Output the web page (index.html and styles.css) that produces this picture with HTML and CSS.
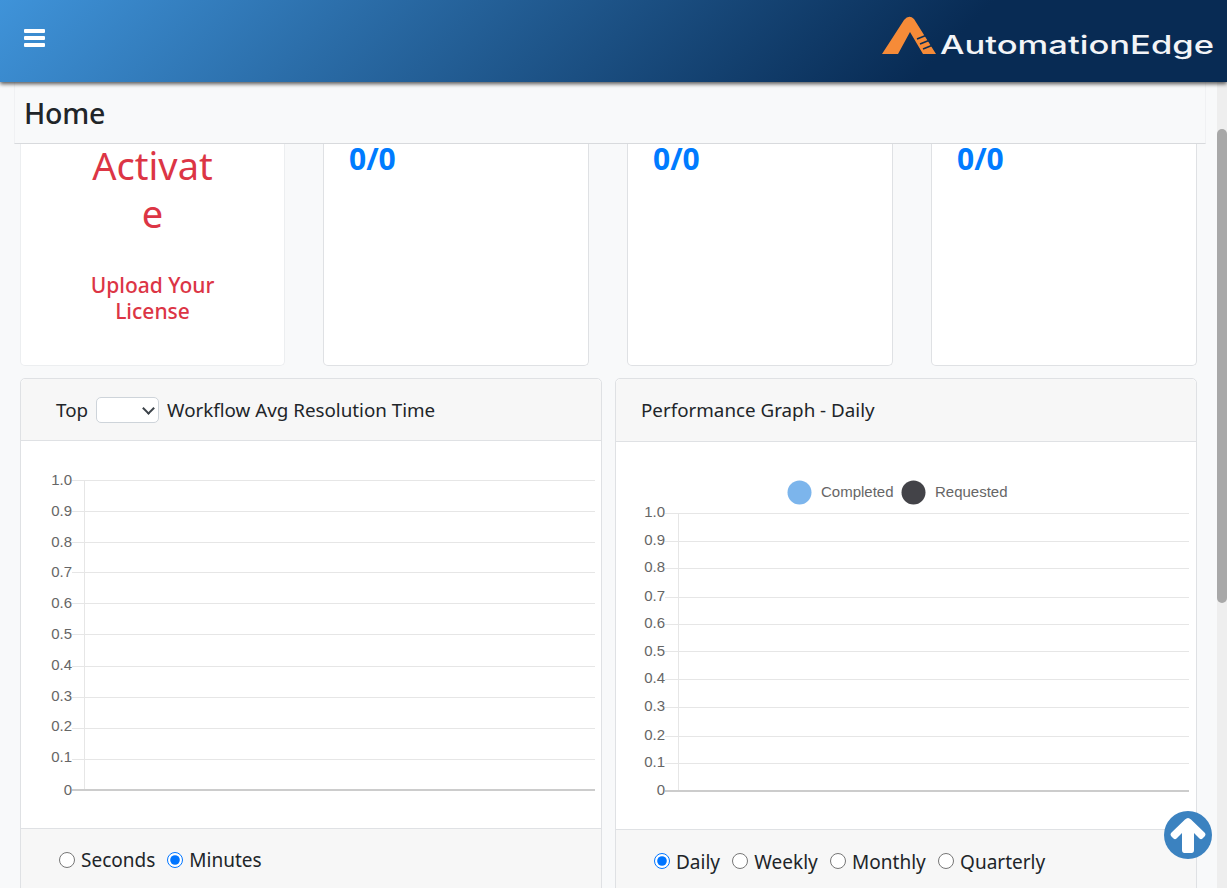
FILE: index.html
```html
<!DOCTYPE html>
<html lang="en">
  <head>
    <meta charset="UTF-8" />
    <meta name="viewport" content="width=device-width, initial-scale=1.0" />
    <title>Home</title>
    <link rel="stylesheet" href="styles.css">
  </head>
  <body>
    <header class="topbar">
      <svg class="menuIcon" width="21" height="18" viewBox="0 0 21 18">
        <rect x="0" y="0" width="21" height="4" rx="1" />
        <rect x="0" y="7" width="21" height="4" rx="1" />
        <rect x="0" y="14" width="21" height="4" rx="1" />
      </svg>
      <svg class="logo" width="335" height="50" viewBox="0 0 335 50">
        <path class="logoMark" d="M2 40 L24 6 Q29 0 34 5 L56 40 L43 40 L30 18 L18 40 Z" />
        <path class="logoCut" d="M37 25 L47 21 M40 30 L50 26 M43 35 L53 31" />
        <text class="logoText" x="60" y="40" textLength="274" lengthAdjust="spacingAndGlyphs">AutomationEdge</text>
      </svg>
    </header>

    <div class="workspace">
      <main class="page">
        <div class="pageTitle"><h1>Home</h1></div>
        <div class="content">
          <section class="statRow">
            <div class="statCard licenseCard">
              <p class="activate">Activate</p>
              <p class="upload">Upload Your License</p>
            </div>
            <div class="statCard"><p class="count">0/0</p></div>
            <div class="statCard"><p class="count">0/0</p></div>
            <div class="statCard"><p class="count">0/0</p></div>
          </section>

          <section class="chartRow">
            <div class="panel">
              <div class="panelHead leftHead">
                <span>Top</span>
                <span class="selectWrap"><select class="topSelect" name="top"><option></option></select></span>
                <span>Workflow Avg Resolution Time</span>
              </div>
              <div class="panelBody leftBody">
                <svg class="chart" width="580" height="387" viewBox="0 0 580 387">
                  <g class="gridLines">
                    <path d="M51 39.5H574M51 70.5H574M51 101.5H574M51 131.5H574M51 162.5H574M51 193.5H574M51 225.5H574M51 256.5H574M51 287.5H574M51 318.5H574" />
                    <path d="M63.5 39V349" />
                  </g>
                  <path class="baseLine" d="M51 349H574" />
                  <g class="axisText">
                    <text x="51" y="43.5">1.0</text>
                    <text x="51" y="74.5">0.9</text>
                    <text x="51" y="105.5">0.8</text>
                    <text x="51" y="135.5">0.7</text>
                    <text x="51" y="166.5">0.6</text>
                    <text x="51" y="198">0.5</text>
                    <text x="51" y="229">0.4</text>
                    <text x="51" y="260">0.3</text>
                    <text x="51" y="290">0.2</text>
                    <text x="51" y="321">0.1</text>
                    <text x="51" y="353.5">0</text>
                  </g>
                </svg>
              </div>
              <div class="panelFoot leftFoot">
                <label><input type="radio" name="unit" />Seconds</label>
                <label><input type="radio" name="unit" checked />Minutes</label>
              </div>
            </div>

            <div class="panel">
              <div class="panelHead rightHead">
                <span>Performance Graph - Daily</span>
              </div>
              <div class="panelBody">
                <svg class="chart" width="580" height="387" viewBox="0 0 580 387">
                  <circle class="dotCompleted" cx="183.5" cy="50.5" r="12" />
                  <text class="legendText" x="205" y="55">Completed</text>
                  <circle class="dotRequested" cx="297.5" cy="50.5" r="12" />
                  <text class="legendText" x="319" y="55">Requested</text>
                  <g class="gridLines">
                    <path d="M49 71.5H573M49 99.5H573M49 126.5H573M49 155.5H573M49 182.5H573M49 209.5H573M49 237.5H573M49 265.5H573M49 294.5H573M49 321.5H573" />
                    <path d="M62.5 71V349" />
                  </g>
                  <path class="baseLine" d="M49 349H573" />
                  <g class="axisText">
                    <text x="49" y="75">1.0</text>
                    <text x="49" y="102.5">0.9</text>
                    <text x="49" y="130">0.8</text>
                    <text x="49" y="158.5">0.7</text>
                    <text x="49" y="186">0.6</text>
                    <text x="49" y="214">0.5</text>
                    <text x="49" y="241">0.4</text>
                    <text x="49" y="269">0.3</text>
                    <text x="49" y="297.5">0.2</text>
                    <text x="49" y="325">0.1</text>
                    <text x="49" y="353">0</text>
                  </g>
                </svg>
              </div>
              <div class="panelFoot rightFoot">
                <label><input type="radio" name="period" checked />Daily</label>
                <label><input type="radio" name="period" />Weekly</label>
                <label><input type="radio" name="period" />Monthly</label>
                <label><input type="radio" name="period" />Quarterly</label>
              </div>
            </div>
          </section>
        </div>
      </main>
      <div class="scrollTrack"><div class="scrollThumb"></div></div>
    </div>

    <button class="toTop" aria-label="Back to top">
      <svg width="48" height="48" viewBox="0 0 48 48">
        <circle cx="24" cy="24" r="24" class="toTopDisc" />
        <path class="toTopArrow" d="M24 7 Q25.5 7 27 8.5 L41 22 Q42 23.5 41 25 L38.5 27.5 Q37 29 35.5 27.5 L30 22 V39 Q30 42 27.5 42 H20.5 Q18 42 18 39 V22 L12.5 27.5 Q11 29 9.5 27.5 L7 25 Q6 23.5 7 22 L21 8.5 Q22.5 7 24 7 Z" />
      </svg>
    </button>
  </body>
</html>
```

FILE: styles.css
```css
* {
  box-sizing: border-box;
  margin: 0;
}
html,
body {
  height: 888px;
  overflow: hidden;
}
body {
  display: flex;
  flex-direction: column;
  background: #f8f9fa;
  color: #212529;
  font-family: "Noto Sans", "Open Sans", sans-serif;
}
.topbar {
  position: relative;
  z-index: 2;
  display: flex;
  flex: none;
  height: 82px;
  background: linear-gradient(135deg, #3f93d9 0%, #082b54 76%);
  box-shadow: 0 2px 4px rgba(0, 0, 0, 0.65);
}
.menuIcon {
  margin: 29px 0 0 24px;
  fill: #fff;
}
.logo {
  margin: 14px 12px 0 auto;
}
.logoMark {
  fill: #f68b38;
}
.logoCut {
  fill: none;
  stroke: #0a2e56;
  stroke-width: 1.6;
}
.logoText {
  fill: #f2f4f7;
  font-family: Inter, sans-serif;
  font-size: 25px;
  font-weight: 500;
}
.workspace {
  display: flex;
  flex: 1;
  min-height: 0;
}
.page {
  flex: 1;
  min-width: 0;
}
.pageTitle {
  display: flex;
  align-items: center;
  height: 62px;
  margin: 0 11px 0 14px;
  padding-left: 9px;
  background: #f8f9fa;
  border-right: 1px solid #f0f1f3;
  border-left: 1px solid #f0f1f3;
  border-bottom: 1px solid #d8dadd;
}
.pageTitle h1 {
  font-size: 28.5px;
  font-weight: 500;
  letter-spacing: -0.2px;
}
.content {
  padding: 0 20px;
}
.statRow {
  display: grid;
  grid-template-columns: 265px 266px 266px 266px;
  gap: 38px;
  height: 222px;
}
.statCard {
  padding: 0 25px;
  background: #fff;
  border: 1px solid #dfe1e4;
  border-top: 0;
  border-radius: 0 0 5px 5px;
}
.licenseCard {
  padding: 0 70px;
  border-color: #eceef0;
  text-align: center;
  color: #dc3545;
}
.activate {
  margin-top: -3px;
  margin-bottom: 35px;
  font-size: 38px;
  line-height: 48px;
  word-break: break-all;
}
.upload {
  margin: 0 -30px;
  font-size: 21px;
  font-weight: 500;
  line-height: 26px;
}
.count {
  margin-top: -3px;
  color: #007bff;
  font-size: 30px;
  font-weight: 700;
  line-height: 36px;
}
.chartRow {
  display: grid;
  grid-template-columns: 582px 582px;
  gap: 13px;
  margin-top: 12px;
}
.panel {
  height: 540px;
  background: #fff;
  border: 1px solid #dfe1e4;
  border-radius: 5px;
}
.panelHead {
  display: flex;
  align-items: center;
  gap: 8px;
  padding-left: 25px;
  background: #f7f7f7;
  border-bottom: 1px solid #dfe1e4;
  border-radius: 5px 5px 0 0;
  font-size: 18.8px;
}
.leftHead {
  height: 62px;
  padding-left: 35px;
}
.rightHead {
  height: 63px;
  padding-bottom: 1px;
}
.selectWrap {
  position: relative;
  display: block;
  height: 26px;
}
.selectWrap::after {
  content: "";
  position: absolute;
  top: 7px;
  left: 48px;
  width: 7px;
  height: 7px;
  border-right: 2px solid #3c4249;
  border-bottom: 2px solid #3c4249;
  transform: rotate(45deg);
  pointer-events: none;
}
.topSelect {
  display: block;
  width: 63px;
  height: 26px;
  background: #fff;
  border: 1px solid #ced4da;
  border-radius: 5px;
  appearance: none;
}
.chart {
  display: block;
}
.leftBody {
  height: 387px;
}
.gridLines path {
  fill: none;
  stroke: #e6e6e6;
}
.baseLine {
  fill: none;
  stroke: #ccc;
  stroke-width: 2;
}
.axisText text {
  fill: #666;
  font-family: "Liberation Sans", sans-serif;
  font-size: 15px;
  text-anchor: end;
}
.legendText {
  fill: #666;
  font-family: "Liberation Sans", sans-serif;
  font-size: 15px;
}
.dotCompleted {
  fill: #7cb5ec;
}
.dotRequested {
  fill: #434348;
}
.panelFoot {
  display: flex;
  height: 100px;
  padding-top: 18px;
  background: #f7f7f7;
  border-top: 1px solid #dfe1e4;
  font-size: 19px;
  line-height: 26px;
}
.panelFoot label {
  display: flex;
  align-items: center;
  height: 26px;
}
.panelFoot input {
  width: 16px;
  height: 16px;
  margin: 0 6px 0 0;
}
.leftFoot {
  gap: 12px;
  padding-left: 38px;
}
.rightFoot {
  gap: 12.3px;
  padding-top: 19px;
  padding-left: 38px;
}
.rightFoot input {
  margin-bottom: 2px;
}
.scrollTrack {
  flex: none;
  width: 10px;
  padding-top: 47px;
  background: #eeeeee;
}
.scrollThumb {
  height: 474px;
  background: #a8a8a8;
  border-radius: 5px;
}
.toTop {
  position: fixed;
  left: 1164px;
  top: 811px;
  z-index: 3;
  width: 48px;
  height: 48px;
  padding: 0;
  background: none;
  border: 0;
}
.toTop svg {
  display: block;
}
.toTopDisc {
  fill: #3b82c0;
}
.toTopArrow {
  fill: #fff;
}
```
